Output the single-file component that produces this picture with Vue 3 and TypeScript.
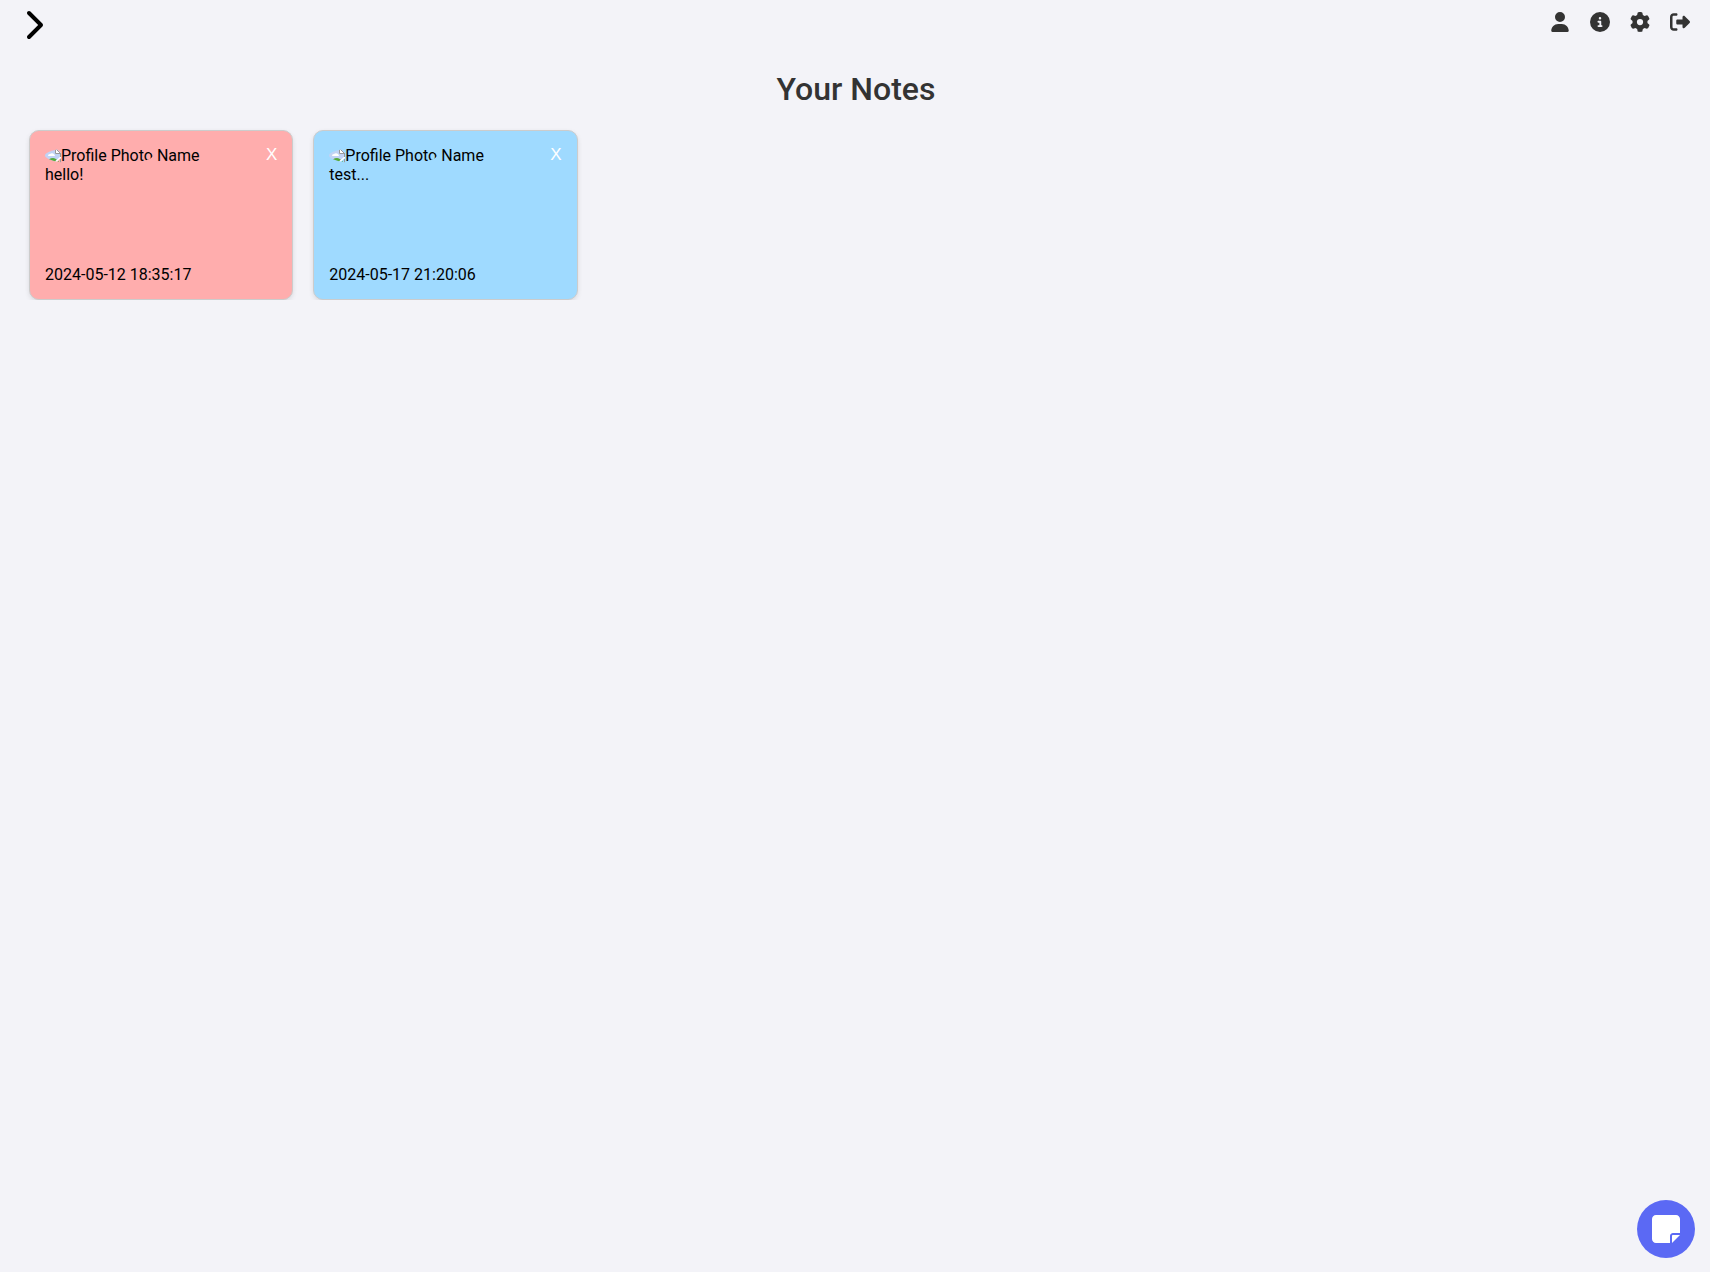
<script setup lang="ts">
import { ref } from 'vue'

interface Note {
  id: number
  text: string
  date: string
  color: string
}

interface NavIcon {
  label: string
  viewBox: string
  path: string
}

const notes = ref<Note[]>([
  { id: 1, text: 'hello!', date: '2024-05-12 18:35:17', color: '#ffadad' },
  { id: 2, text: 'test...', date: '2024-05-17 21:20:06', color: '#9fdaff' },
])

const navIcons: NavIcon[] = [
  {
    label: 'Profile',
    viewBox: '0 0 448 512',
    path: 'M224 256A128 128 0 1 0 224 0a128 128 0 1 0 0 256zm-45.700 48C79.800 304 0 383.800 0 482.300C0 498.700 13.300 512 29.700 512H418.300c16.400 0 29.700-13.300 29.700-29.700C448 383.800 368.200 304 269.700 304H178.300z',
  },
  {
    label: 'About',
    viewBox: '0 0 512 512',
    path: 'M256 512A256 256 0 1 0 256 0a256 256 0 1 0 0 512zM216 336h24V272H216c-13.300 0-24-10.700-24-24s10.700-24 24-24h48c13.300 0 24 10.700 24 24v88h8c13.300 0 24 10.700 24 24s-10.700 24-24 24H216c-13.300 0-24-10.700-24-24s10.700-24 24-24zm40-208a32 32 0 1 1 0 64 32 32 0 1 1 0-64z',
  },
  {
    label: 'Settings',
    viewBox: '0 0 512 512',
    path: 'M495.900 166.600c3.200 8.700 .5 18.400-6.400 24.600l-43.300 39.400c1.100 8.300 1.700 16.800 1.700 25.400s-.6 17.100-1.700 25.400l43.300 39.400c6.900 6.200 9.600 15.900 6.400 24.600c-4.400 11.900-9.700 23.300-15.800 34.300l-4.700 8.100c-6.600 11-14 21.400-22.100 31.200c-5.900 7.200-15.700 9.600-24.500 6.800l-55.700-17.700c-13.400 10.300-28.200 18.900-44 25.400l-12.500 57.100c-2 9.100-9 16.300-18.200 17.800c-13.800 2.300-28 3.500-42.500 3.500s-28.700-1.200-42.500-3.500c-9.200-1.500-16.200-8.700-18.200-17.800l-12.500-57.100c-15.800-6.500-30.600-15.100-44-25.400L83.100 425.900c-8.800 2.800-18.600 .3-24.500-6.800c-8.100-9.800-15.500-20.200-22.100-31.200l-4.700-8.100c-6.100-11-11.400-22.400-15.800-34.300c-3.200-8.700-.5-18.400 6.400-24.600l43.300-39.400C64.600 273.100 64 264.600 64 256s.6-17.100 1.700-25.400L22.400 191.200c-6.900-6.200-9.600-15.900-6.400-24.600c4.400-11.900 9.700-23.300 15.800-34.300l4.700-8.100c6.600-11 14-21.400 22.100-31.200c5.900-7.200 15.700-9.600 24.500-6.800l55.700 17.700c13.400-10.300 28.200-18.900 44-25.400l12.500-57.100c2-9.100 9-16.300 18.200-17.800C227.300 1.200 241.500 0 256 0s28.700 1.200 42.500 3.500c9.200 1.500 16.200 8.700 18.200 17.800l12.500 57.100c15.800 6.500 30.600 15.100 44 25.400l55.700-17.700c8.800-2.800 18.600-.3 24.500 6.800c8.100 9.800 15.500 20.200 22.100 31.200l4.700 8.100c6.100 11 11.400 22.400 15.800 34.300zM256 336a80 80 0 1 0 0-160 80 80 0 1 0 0 160z',
  },
  {
    label: 'Log out',
    viewBox: '0 0 512 512',
    path: 'M377.900 105.900L500.700 228.700c7.200 7.200 11.300 17.100 11.300 27.300s-4.100 20.100-11.300 27.300L377.900 406.100c-6.400 6.400-15 9.900-24 9.900c-18.700 0-33.900-15.200-33.900-33.900l0-62.100-128 0c-17.700 0-32-14.300-32-32l0-64c0-17.700 14.300-32 32-32l128 0 0-62.100c0-18.700 15.200-33.900 33.900-33.900c9 0 17.600 3.600 24 9.900zM160 96L96 96c-17.700 0-32 14.300-32 32l0 256c0 17.700 14.300 32 32 32l64 0c17.700 0 32 14.300 32 32s-14.300 32-32 32l-64 0c-53 0-96-43-96-96L0 128C0 75 43 32 96 32l64 0c17.700 0 32 14.300 32 32s-14.300 32-32 32z',
  },
]

function removeNote(id: number): void {
  notes.value = notes.value.filter((note) => note.id !== id)
}
</script>

<template>
  <div class="page">
    <header class="topbar">
      <button class="icon-button" type="button" aria-label="Open sidebar">
        <svg class="chevron" viewBox="0 0 320 512" aria-hidden="true">
          <path d="M310.600 233.400c12.500 12.500 12.500 32.800 0 45.300l-192 192c-12.500 12.500-32.800 12.500-45.300 0s-12.500-32.800 0-45.300L242.700 256 73.400 86.600c-12.500-12.500-12.500-32.800 0-45.300s32.800-12.500 45.300 0l192 192z" />
        </svg>
      </button>
      <nav class="nav">
        <a v-for="icon in navIcons" :key="icon.label" href="#" :aria-label="icon.label">
          <svg :viewBox="icon.viewBox" aria-hidden="true"><path :d="icon.path" /></svg>
        </a>
      </nav>
    </header>

    <main>
      <h1>Your Notes</h1>
      <div class="notes">
        <article v-for="note in notes" :key="note.id" class="note" :style="{ backgroundColor: note.color }">
          <div class="note-head">
            <div class="author">
              <span class="avatar">
                <svg viewBox="0 0 16 16" aria-hidden="true">
                  <path fill="#c1d3f5" d="M0 0h11l5 5v4l-7 7H0z" />
                  <path fill="#fff" d="M3 8a2 2 0 0 1 2-2 3 3 0 0 1 5 2z" />
                  <path fill="#55ab3d" d="M1 16c1-4 4-6 7-6 2 0 3 1 4 2l-4 4z" />
                  <path fill="#fff" stroke="#9a9a9a" d="M10.500.500v5h5z" />
                  <path fill="#fff" d="M7 16l9-8v2l-7 6z" />
                  <path fill="#55ab3d" d="M11 15l3-2v2z" />
                  <path fill="none" stroke="#9a9a9a" d="M15.500 5v4M15.500 11v4.500H10" />
                </svg><span>Profile Photo</span>
              </span>
              <span>Name</span>
            </div>
            <button class="close" type="button" aria-label="Delete note" @click="removeNote(note.id)">X</button>
          </div>
          <p>{{ note.text }}</p>
          <time :datetime="note.date">{{ note.date }}</time>
        </article>
      </div>
    </main>

    <button class="add" type="button" aria-label="New note">
      <svg viewBox="0 0 448 512" aria-hidden="true">
        <path d="M64 32C28.700 32 0 60.700 0 96V416c0 35.300 28.700 64 64 64H288V368c0-26.500 21.500-48 48-48H448V96c0-35.300-28.700-64-64-64H64zM448 352H402.700 336c-8.800 0-16 7.200-16 16v66.700V480l32-32 64-64 32-32z" />
      </svg>
    </button>
  </div>
</template>

<style>
body {
  background: #f3f3f8;
}
</style>

<style scoped>
.page {
  color: #000;
  font: 16px/19px Roboto, sans-serif;
}

button {
  margin: 0;
  padding: 0;
  border: 0;
  background: none;
  cursor: pointer;
}

.topbar {
  display: flex;
  justify-content: space-between;
  align-items: flex-start;
  padding: 9px 20px 0 23px;
}

.icon-button {
  display: flex;
}

.chevron {
  width: 20px;
  height: 32px;
}

.nav {
  display: flex;
  gap: 20px;
  padding-top: 3px;
}

.nav a {
  display: flex;
  color: #333;
}

.nav svg {
  width: 20px;
  height: 20px;
  fill: currentColor;
}

main {
  padding-left: 2px;
}

h1 {
  margin: 29px 0 22px;
  color: #333;
  font-size: 32px;
  font-weight: 500;
  line-height: 38px;
  text-align: center;
}

.notes {
  display: flex;
  flex-wrap: wrap;
  gap: 20px;
  padding: 0 29px 0 27px;
}

.note {
  display: flex;
  flex-direction: column;
  box-sizing: border-box;
  width: 16%;
  min-height: 170px;
  padding: 15px;
  border: 1px solid #ccc;
  border-radius: 10px;
  box-shadow: 0 2px 5px rgba(0, 0, 0, 0.1);
}

.note-head {
  display: flex;
  justify-content: space-between;
  align-items: flex-start;
}

.author {
  display: flex;
  gap: 4px;
}

.avatar {
  display: flex;
  align-items: center;
  height: 19px;
  border-radius: 50%;
  overflow: hidden;
}

.avatar svg {
  flex: none;
  width: 16px;
  height: 16px;
}

.close {
  color: #fff;
  font: 17px/18px "Liberation Sans", Arial, sans-serif;
}

.note p {
  margin: 0;
}

.note time {
  margin-top: auto;
}

.add {
  position: fixed;
  right: 15px;
  bottom: 14px;
  display: flex;
  justify-content: center;
  align-items: center;
  width: 58px;
  height: 58px;
  border-radius: 50%;
  background: #5b69f4;
}

.add svg {
  width: 28px;
  height: 32px;
  fill: #fff;
}
</style>
